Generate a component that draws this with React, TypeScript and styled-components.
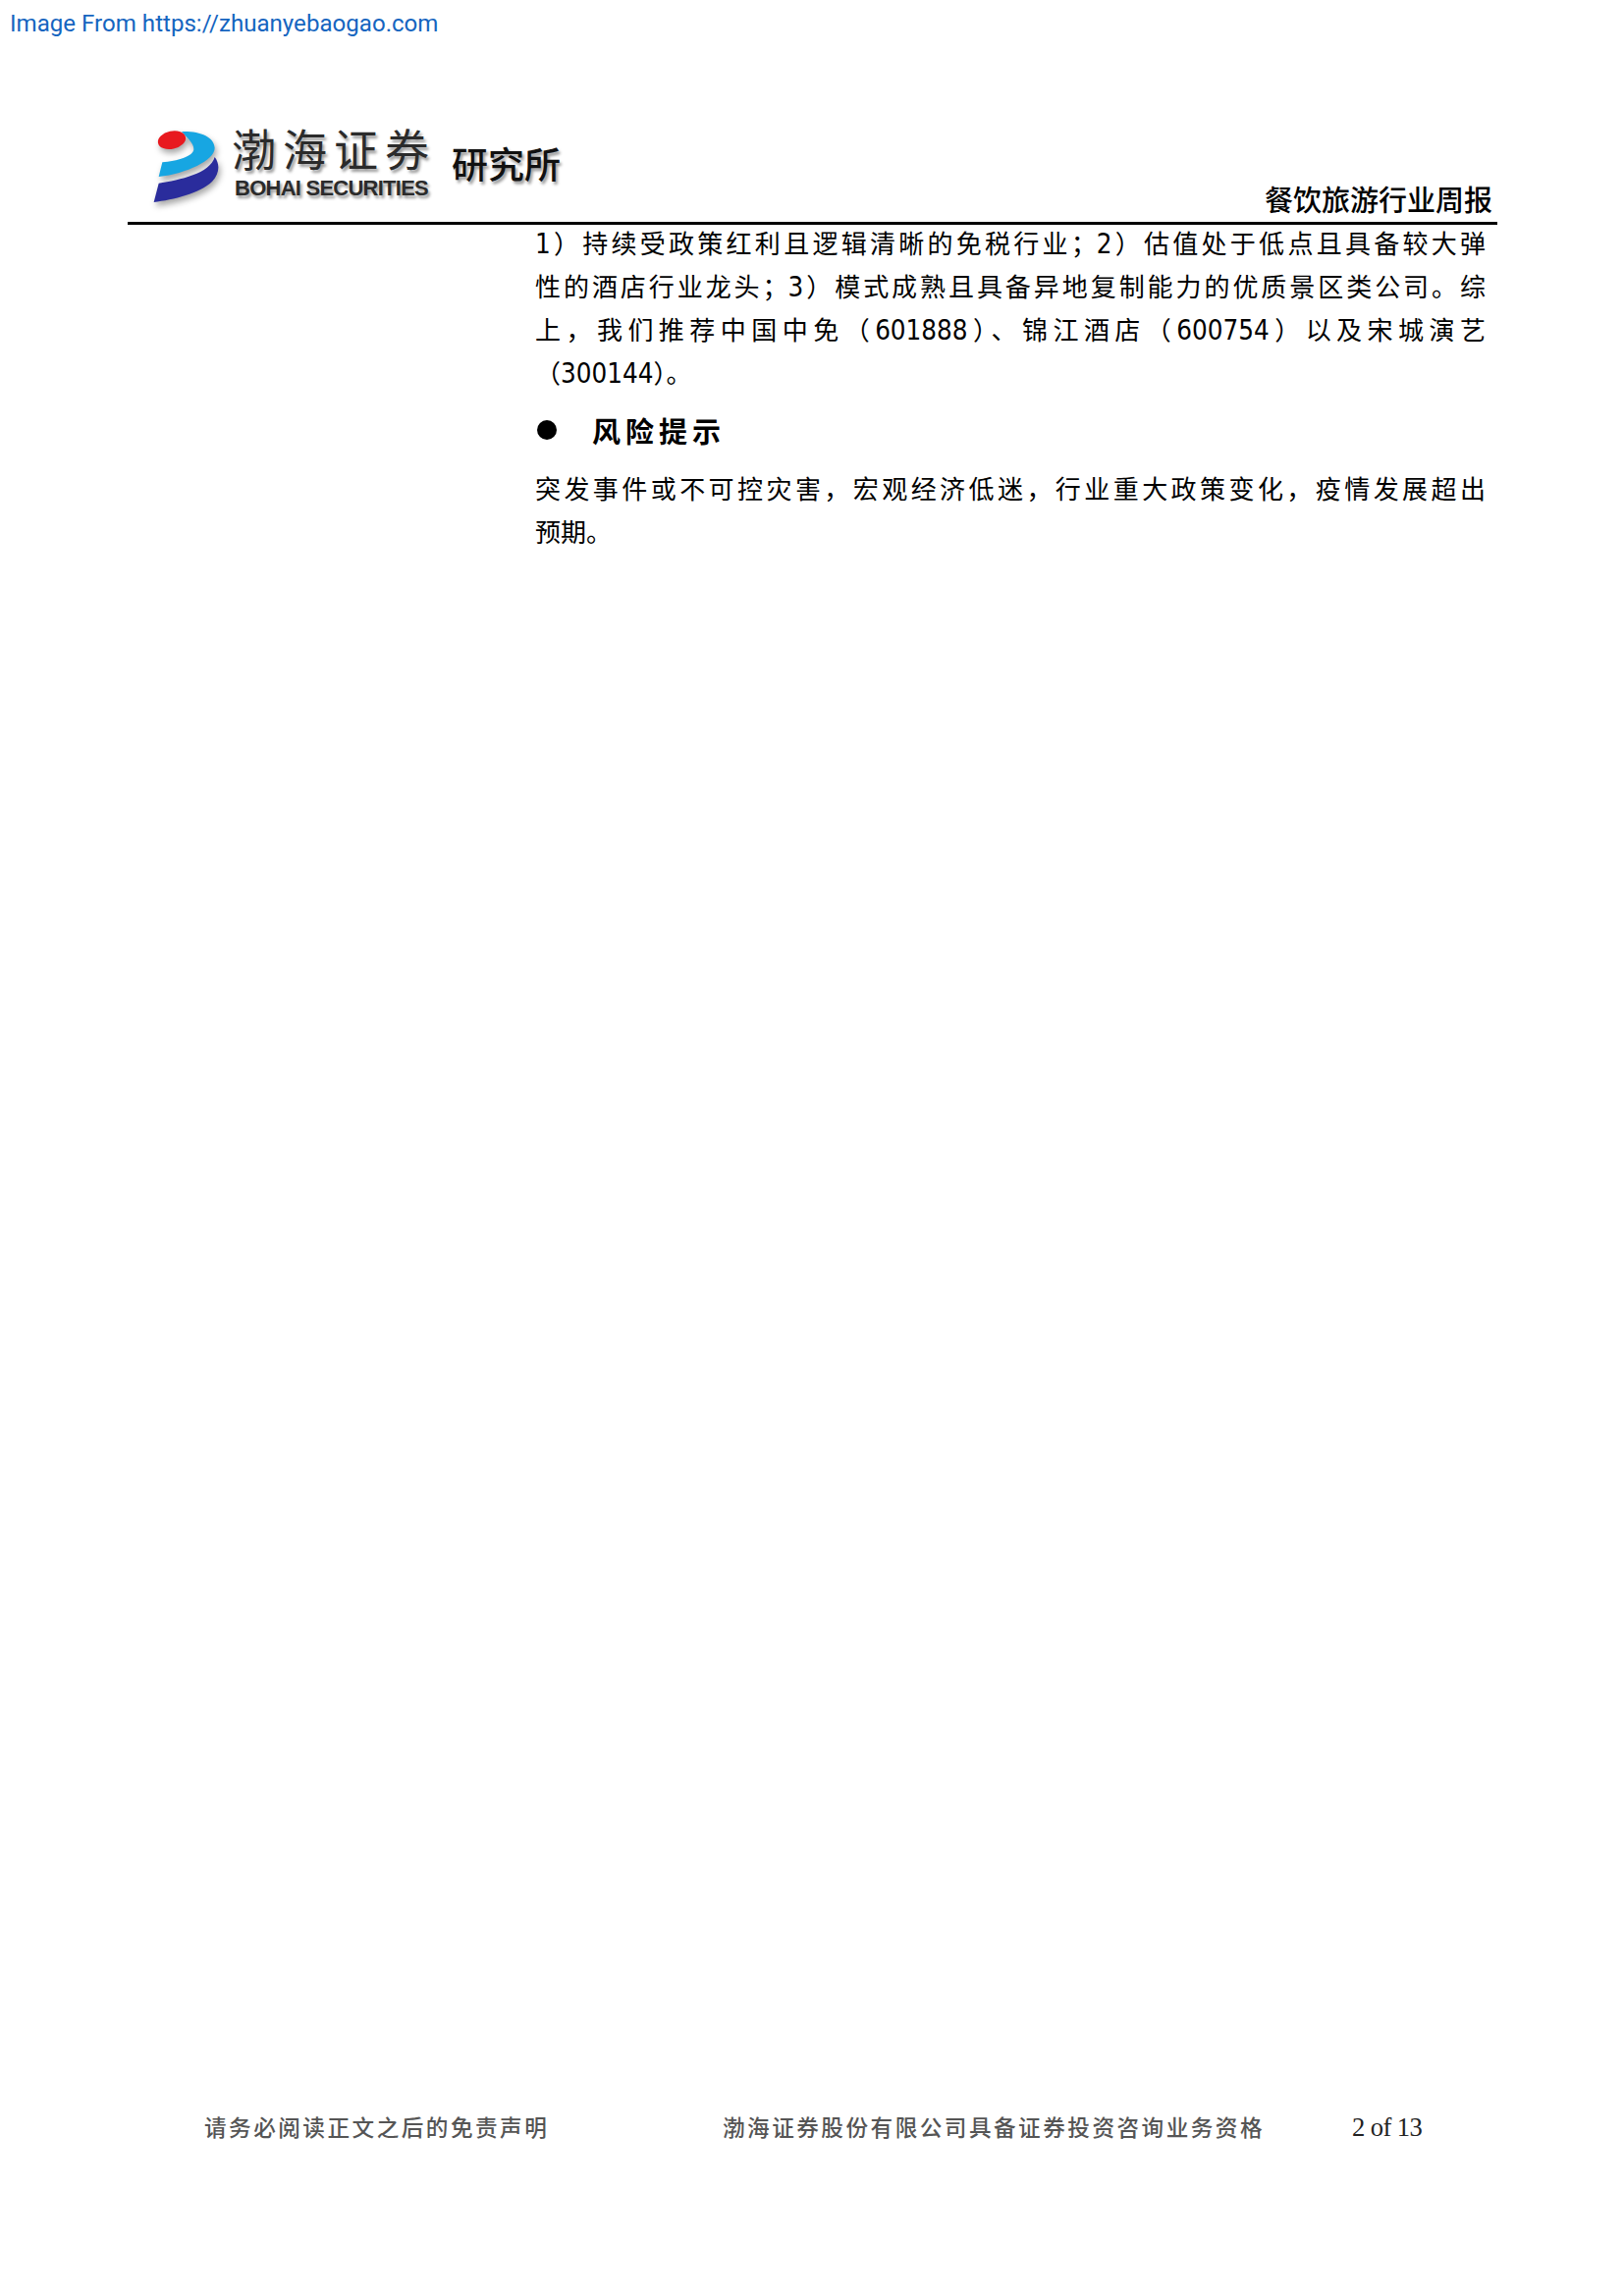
import React, { FC } from "react";
import styled, { createGlobalStyle } from "styled-components";

const GlobalStyle = createGlobalStyle`
  html, body {
    margin: 0;
    padding: 0;
    background: #fff;
  }
`;

const CJK_SANS = `"DejaVu Sans", "Noto Sans CJK SC", sans-serif`;

const Page = styled.div`
  width: 1654px;
  height: 2339px;
  display: flex;
  flex-direction: column;
  font-family: ${CJK_SANS};
  color: #000;
`;

const SourceLink = styled.a`
  height: 48px;
  padding-left: 10px;
  font-family: Roboto, sans-serif;
  font-size: 24.1px;
  line-height: 48px;
  color: #1565c0;
  text-decoration: none;
`;

const Header = styled.header`
  height: 181px;
  margin: 0 129px 0 130px;
  box-sizing: border-box;
  padding: 78px 5px 0 22px;
  display: flex;
  justify-content: space-between;
  border-bottom: 3px solid #000;
`;

const Logo = styled.div`
  height: 96px;
  display: flex;
`;

const LogoMark = styled.svg`
  width: 82px;
  height: 92px;
  margin-top: 4px;
  flex: none;
  filter: drop-shadow(2px 4px 3px rgba(0, 0, 0, 0.35));
`;

const LogoWords = styled.div`
  margin-left: 2px;
  padding-top: 4px;
  width: 208px;
  display: flex;
  flex-direction: column;
`;

const LogoName = styled.div`
  height: 49px;
  font-family: "Liberation Sans", "Noto Sans CJK SC", sans-serif;
  font-size: 45px;
  line-height: 49px;
  letter-spacing: 7px;
  white-space: nowrap;
  color: #2b2b2b;
  text-shadow: 2px 3px 3px rgba(0, 0, 0, 0.4);
`;

const LogoLatin = styled.div`
  margin-left: 3px;
  font-family: "Liberation Sans", sans-serif;
  font-weight: 700;
  font-size: 22px;
  line-height: 26px;
  letter-spacing: -0.75px;
  white-space: nowrap;
  color: #2b2b2b;
  text-shadow: 2px 3px 3px rgba(0, 0, 0, 0.4);
`;

const LogoDept = styled.div`
  margin: 17px 0 0 16px;
  font-family: "Noto Sans CJK SC", sans-serif;
  font-size: 37px;
  line-height: 46px;
  font-weight: 500;
  white-space: nowrap;
  color: #111;
  text-shadow: 2px 3px 3px rgba(0, 0, 0, 0.4);
`;

const ReportName = styled.div`
  align-self: flex-end;
  padding-bottom: 6px;
  font-family: "Noto Sans CJK SC", sans-serif;
  font-size: 29px;
  font-weight: 500;
  line-height: 36px;
  white-space: nowrap;
`;

const Content = styled.main`
  margin-left: 545px;
  width: 968px;
`;

const Line = styled.div<{ $fill?: boolean }>`
  height: 44px;
  font-size: 26px;
  line-height: 38px;
  text-align: justify;
  text-align-last: ${p => (p.$fill ? "justify" : "left")};
  white-space: nowrap;
`;

// stock codes and list numbers sit in a taller, narrower face than the CJK text
const Num = styled.span`
  font-family: "DejaVu Sans", sans-serif;
  font-size: 27.5px;
  font-stretch: condensed;
`;

const Bullet = styled.div`
  height: 65px;
  margin-bottom: 10px;
  display: flex;
  align-items: center;
  gap: 36px;
  font-family: "Noto Sans CJK SC", sans-serif;
  font-size: 29px;
  font-weight: 700;
  letter-spacing: 5px;
`;

const BulletDot = styled.span`
  width: 20px;
  height: 20px;
  margin-left: 2px;
  border-radius: 50%;
  background: #000;
`;

const Footer = styled.footer`
  margin-top: auto;
  height: 194px;
  padding-left: 208px;
  display: flex;
  font-family: "Noto Sans CJK SC", sans-serif;
  font-size: 22.6px;
  font-weight: 500;
  letter-spacing: 2.5px;
  line-height: 44px;
  color: #555;
`;

const FooterNote = styled.div`
  width: 528px;
`;

const FooterClaim = styled.div`
  width: 641px;
  white-space: nowrap;
`;

const PageNo = styled.div`
  font-family: "Liberation Serif", serif;
  font-size: 26.6px;
  font-weight: 400;
  letter-spacing: -0.6px;
  color: #222;
`;

const App: FC = () => (
  <Page>
    <GlobalStyle />
    <SourceLink href="#">Image From https://zhuanyebaogao.com</SourceLink>
    <Header>
      <Logo>
        <LogoMark viewBox="36 30 246 276">
          <path
            d="M65 200 C130 190 222 170 236 120 C252 140 252 170 228 195 C190 232 110 250 50 258 Z"
            fill="#2a2c9c"
          />
          <path
            d="M135 42 C190 40 235 58 236 92 C236 130 150 170 65 180 L76 136 C120 132 172 118 172 96 C172 76 150 60 135 42 Z"
            fill="#17a6e2"
          />
          <ellipse cx="105" cy="68" rx="43" ry="27" transform="rotate(-12 105 68)" fill="#e8191f" />
        </LogoMark>
        <LogoWords>
          <LogoName>渤海证券</LogoName>
          <LogoLatin>BOHAI SECURITIES</LogoLatin>
        </LogoWords>
        <LogoDept>研究所</LogoDept>
      </Logo>
      <ReportName>餐饮旅游行业周报</ReportName>
    </Header>
    <Content>
      <Line $fill>
        <Num>1</Num>）持续受政策红利且逻辑清晰的免税行业；<Num>2</Num>）估值处于低点且具备较大弹
      </Line>
      <Line $fill>
        性的酒店行业龙头；<Num>3</Num>）模式成熟且具备异地复制能力的优质景区类公司。综
      </Line>
      <Line $fill>
        上，我们推荐中国中免（<Num>601888</Num>）、锦江酒店（<Num>600754</Num>）以及宋城演艺
      </Line>
      <Line>
        （<Num>300144</Num>）。
      </Line>
      <Bullet>
        <BulletDot />
        风险提示
      </Bullet>
      <Line $fill>突发事件或不可控灾害，宏观经济低迷，行业重大政策变化，疫情发展超出</Line>
      <Line>预期。</Line>
    </Content>
    <Footer>
      <FooterNote>请务必阅读正文之后的免责声明</FooterNote>
      <FooterClaim>渤海证券股份有限公司具备证券投资咨询业务资格</FooterClaim>
      <PageNo>2 of 13</PageNo>
    </Footer>
  </Page>
);

export default App;
